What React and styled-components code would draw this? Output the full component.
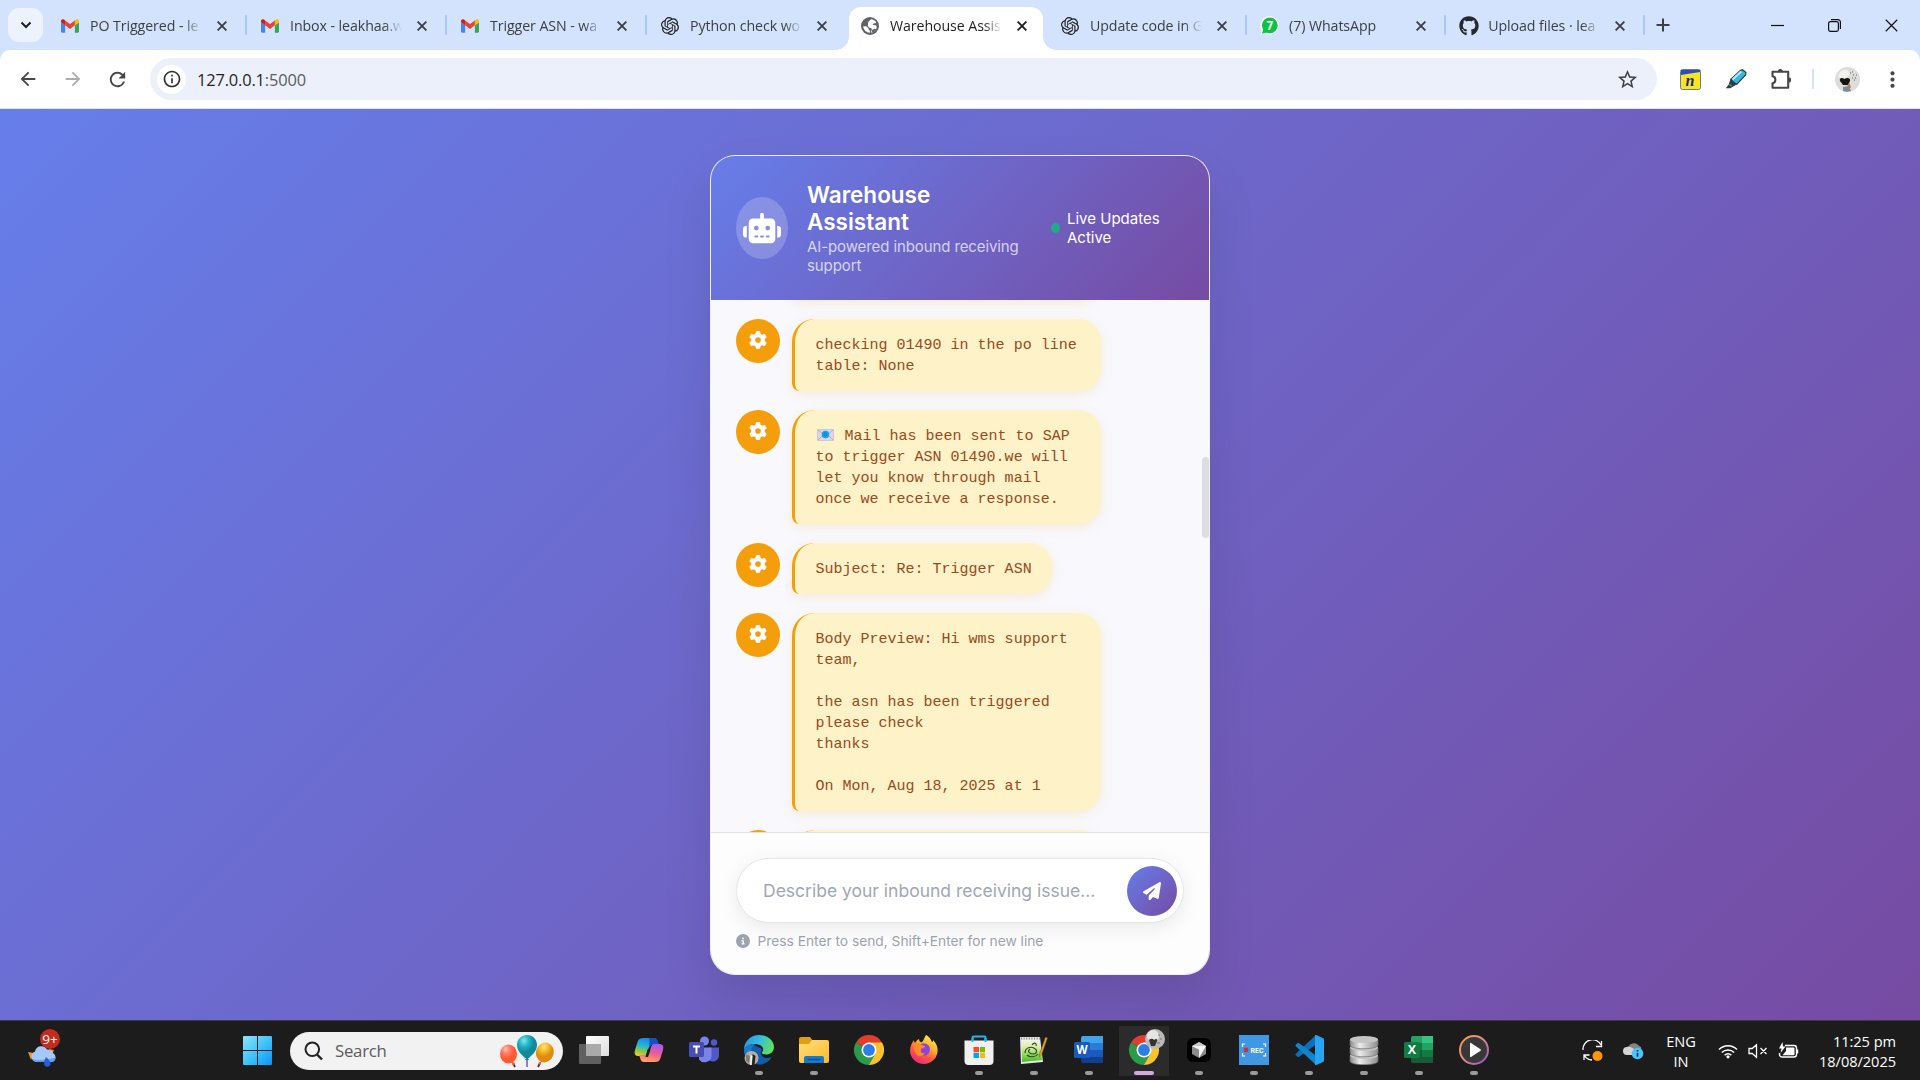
import React from "react";
import styled, { createGlobalStyle, css } from "styled-components";
import { FaRobot, FaGear, FaPaperPlane, FaCircleInfo, FaGithub } from "react-icons/fa6";
import { SiOpenai } from "react-icons/si";
import { MdArrowBack, MdArrowForward, MdRefresh, MdStarOutline, MdMoreVert, MdInfoOutline } from "react-icons/md";

const ui = `"Open Sans", "Noto Sans", sans-serif`;
const inter = `Inter, "Liberation Sans", sans-serif`;
const brand = "linear-gradient(135deg, #667eea 0%, #764ba2 100%)";

const GlobalStyle = createGlobalStyle`
  *, *::before, *::after { box-sizing: border-box; }
  body { margin: 0; overflow: hidden; font-family: ${ui}; }
  svg { display: block; flex: none; }
`;

const Screen = styled.div`
  width: 1920px;
  height: 1080px;
  display: grid;
  grid-template-columns: 1920px;
  grid-template-rows: 50px 59px 911px 60px;
  background: #d3e3fd;
`;

/* ---------- tab strip ---------- */
const TabStrip = styled.div`
  display: flex;
  align-items: center;
  padding-left: 8px;
  background: #d3e3fd;
`;
const TabSearch = styled.div`
  width: 35px;
  height: 34px;
  border-radius: 11px;
  background: #ecf2fe;
  display: grid;
  place-items: center;
  margin-right: 6px;
`;
const Tab = styled.div`
  position: relative;
  width: 194px;
  height: 43px;
  margin-top: 7px;
  margin-right: 6px;
  padding: 0 12px;
  display: flex;
  align-items: center;
  padding-bottom: 6px;
  color: #3c4043;
  &:nth-child(n + 7) { margin-right: 5.1px; }
  ${(p) =>
    p.$active &&
    css`
      background: #fff;
      border-radius: 12px 12px 0 0;
      color: #1f1f1f;
      &::before,
      &::after {
        content: "";
        position: absolute;
        bottom: 0;
        width: 13px;
        height: 13px;
      }
      &::before { left: -13px; background: radial-gradient(circle at 0 0, transparent 12.5px, #fff 13px); }
      &::after { right: -13px; background: radial-gradient(circle at 100% 0, transparent 12.5px, #fff 13px); }
    `}
`;
const Favicon = styled.span`
  width: 18px;
  height: 20px;
  display: grid;
  place-items: center;
  color: #1f1f1f;
`;
const TabTitle = styled.span`
  width: 112px;
  margin-left: 11px;
  overflow: hidden;
  white-space: nowrap;
  font-size: 14.2px;
  letter-spacing: -0.08px;
  line-height: 20px;
  mask-image: linear-gradient(90deg, #000 84%, transparent 100%);
`;
const TabClose = styled.span`
  margin-left: 15px;
`;
const Separator = styled.span`
  position: absolute;
  right: -4px;
  top: 8px;
  width: 2.5px;
  height: 20px;
  border-radius: 2px;
  background: #a8c7fa;
`;
const NewTab = styled.div`
  margin-left: 10px;
`;
const WindowControls = styled.div`
  margin-left: auto;
  display: flex;
  align-items: center;
  gap: 44.2px;
  padding-right: 22px;
`;

/* ---------- toolbar ---------- */
const Toolbar = styled.div`
  display: flex;
  align-items: center;
  background: #fff;
  border-radius: 10px 10px 0 0;
  border-bottom: 1px solid #dfe3e8;
  padding: 0 15px 0 17px;
  color: #474747;
`;
const NavButtons = styled.div`
  display: flex;
  gap: 22.5px;
  width: 133px;
`;
const Omnibox = styled.div`
  width: 1507px;
  height: 42px;
  border-radius: 21px;
  background: #ecf0fa;
  display: flex;
  align-items: center;
  padding: 0 18px 0 7px;
  color: #3f4145;
`;
const SiteInfo = styled.span`
  width: 29px;
  height: 29px;
  border-radius: 50%;
  background: #fff;
  display: grid;
  place-items: center;
`;
const Url = styled.span`
  flex: 1;
  margin-left: 11px;
  font-size: 16.4px;
  letter-spacing: -0.15px;
  color: #1f1f1f;
`;
const Port = styled.span`
  color: #5a5d61;
`;
const Actions = styled.div`
  display: flex;
  align-items: center;
  justify-content: space-between;
  width: 225px;
  margin-left: 23px;
`;
const Extensions = styled.div`
  display: flex;
  align-items: center;
  gap: 24px;
`;
const Divider = styled.span`
  width: 2px;
  height: 20px;
  background: #d3e3fd;
`;

/* ---------- page ---------- */
const Page = styled.main`
  background: ${brand};
  display: flex;
  align-items: center;
  justify-content: center;
  font-family: ${inter};
`;
const Card = styled.section`
  width: 500px;
  height: 820px;
  border-radius: 25px;
  border: 1px solid rgba(255, 255, 255, 0.9);
  background: #fdfdfd;
  overflow: hidden;
  display: flex;
  flex-direction: column;
  box-shadow: 0 25px 50px rgba(0, 0, 0, 0.1);
  background-clip: padding-box;
`;
const CardHeader = styled.header`
  height: 144px;
  padding: 0 25px;
  background: ${brand};
  display: flex;
  align-items: center;
  color: #fff;
`;
const BotAvatar = styled.div`
  width: 52px;
  height: 62px;
  border-radius: 50%;
  background: rgba(255, 255, 255, 0.2);
  display: grid;
  place-items: center;
`;
const Heading = styled.div`
  margin-left: 19px;
  width: 244px;
  padding-top: 1.5px;
`;
const Title = styled.h1`
  margin: 0;
  width: 160px;
  font-size: 22.5px;
  line-height: 27px;
  font-weight: 600;
`;
const Subtitle = styled.p`
  margin: 2px 0 0;
  width: 225px;
  font-size: 15px;
  line-height: 19px;
  letter-spacing: -0.1px;
  color: rgba(255, 255, 255, 0.72);
`;
const LiveDot = styled.span`
  width: 9px;
  height: 10px;
  border-radius: 50%;
  background: #22a98a;
`;
const LiveText = styled.span`
  width: 110px;
  margin-left: 7px;
  font-size: 15px;
  line-height: 19px;
`;

const ChatArea = styled.div`
  height: 532px;
  overflow: hidden;
  background: #f8f8fd;
  display: flex;
  justify-content: space-between;
`;
const Messages = styled.div`
  display: flex;
  flex-direction: column;
  justify-content: flex-start;
  gap: 19px;
  margin-top: -51px;
  padding-left: 25px;
`;
const Message = styled.div`
  display: flex;
  align-items: flex-start;
  gap: 12px;
`;
const MessageIcon = styled.div`
  width: 44px;
  height: 44px;
  border-radius: 50%;
  background: #f59e0b;
  color: #fff;
  display: grid;
  place-items: center;
  padding-bottom: 1px;
`;
const Bubble = styled.div`
  width: ${(p) => (p.$fit ? "auto" : "309px")};
  min-height: 51px;
  padding: 16px 20px 14px 20.6px;
  border-left: 3px solid #f59e0b;
  border-radius: 22.5px 22.5px 22.5px 7.5px;
  background: #fef2c8;
  color: #984a1a;
  font-family: "Courier New", "Liberation Mono", monospace;
  font-size: 15px;
  line-height: 21px;
  white-space: pre-wrap;
  box-shadow: 0 3px 12px rgba(245, 158, 11, 0.15);
  svg { display: inline-block; vertical-align: -1px; margin: 0 1.5px; }
`;
const Scrollbar = styled.div`
  width: 7px;
  height: 81px;
  margin-top: 157px;
  border-radius: 4px;
  background: #dddde2;
`;
const Composer = styled.footer`
  flex: 1;
  border-top: 1px solid #e3e3e6;
  background: #fdfdfd;
  padding: 25px 25px 0;
`;
const InputPill = styled.div`
  width: 448px;
  height: 65px;
  border: 1px solid #e5e5e7;
  border-radius: 33px;
  background: #fff;
  box-shadow: 0 5px 19px rgba(0, 0, 0, 0.08);
  display: flex;
  align-items: center;
  justify-content: space-between;
  padding: 1px 6px 0 26px;
`;
const Placeholder = styled.span`
  font-size: 17.5px;
  color: #a0a7b4;
`;
const SendButton = styled.button`
  width: 50px;
  height: 50px;
  border: 0;
  border-radius: 50%;
  padding: 0;
  background: ${brand};
  color: #fff;
  display: grid;
  place-items: center;
`;
const Hint = styled.div`
  display: flex;
  align-items: center;
  gap: 7.5px;
  margin-top: 8px;
  height: 20px;
  font-size: 13.75px;
  color: #9ca3af;
`;

/* ---------- taskbar ---------- */
const Taskbar = styled.div`
  display: grid;
  grid-template-columns: 243px auto 1fr;
  align-items: center;
  background: #1c1c1c;
  border-top: 1px solid #3a3a40;
  color: #fff;
`;
const Widgets = styled.div`
  padding-left: 26px;
  padding-bottom: 8px;
`;
const Center = styled.div`
  display: flex;
  align-items: center;
`;
const SearchPill = styled.div`
  width: 273px;
  height: 38px;
  margin: 0 3.5px 0 18px;
  border-radius: 19px;
  background: #f2f2f2;
  display: flex;
  align-items: center;
  padding: 0 8px 0 14px;
  color: #5c5c5c;
  font-size: 16.8px;
  letter-spacing: -0.25px;
`;
const SearchLabel = styled.span`
  flex: 1;
  margin-left: 12px;
`;
const AppSlot = styled.div`
  width: 55px;
  height: 50px;
  display: grid;
  grid-template-rows: 45px 5px;
  justify-items: center;
  align-items: center;
  background: ${(p) => (p.$active ? "linear-gradient(#2b2b2b,#2b2b2b) center / 50px 50px no-repeat" : "none")};
  &::after {
    content: "";
    width: ${(p) => (p.$active ? 20 : 8)}px;
    height: 4px;
    border-radius: 2px;
    background: ${(p) => (p.$active ? "#d5a9e0" : p.$open ? "#9a9a9a" : "transparent")};
  }
  svg { margin-top: 3px; }
`;
const Tray = styled.div`
  display: flex;
  align-items: center;
  justify-content: flex-end;
  padding-right: 24px;
  font-size: 14.6px;
  letter-spacing: -0.05px;
  line-height: 20px;
`;
const SyncStatus = styled.div`
  display: flex;
  align-items: center;
  gap: 19px;
`;
const Language = styled.div`
  width: 40px;
  margin: 0 17px;
  text-align: center;
`;
const Status = styled.div`
  display: flex;
  align-items: center;
  gap: 10px;
`;
const Clock = styled.div`
  width: 90px;
  margin-left: 7px;
  text-align: right;
  white-space: nowrap;
`;

/* ---------- drawings ---------- */
const Gmail = () => (
  <svg width="18" height="14" viewBox="0 0 24 18">
    <path d="M0 4v12.4C0 17.3.7 18 1.6 18h3.9V8z" fill="#4285f4" />
    <path d="M24 4v12.4c0 .9-.7 1.6-1.6 1.6h-3.9V8z" fill="#34a853" />
    <path d="M18.500 1.500V8L24 4V2.400C24 .3 21.700-.8 20.100.4z" fill="#fbbc04" />
    <path d="M5.500 8V1.500L12 6.400l6.500-4.900V8L12 12.900z" fill="#ea4335" />
    <path d="M0 2.400V4l5.500 4V1.500L3.900.4C2.300-.8 0 .3 0 2.400z" fill="#c5221f" />
  </svg>
);
const Globe = () => (
  <svg width="18" height="18" viewBox="0 0 18 18">
    <circle cx="9" cy="9" r="9" fill="#5f6368" />
    <path d="M10 2.200c2.500.2 4.300 1.600 5.300 3.300-1 1.300-2.300.6-3.300 1.200-.8.500.2 1.500 1.300 1.400 1.300 0 2.200.8 2.500 1.600-.3 3.200-2.600 5.600-5.800 6.100-.6-1.300.3-2 .8-2.700.5-1-.2-1.800-1.400-2.100C7.500 10.500 6.300 9 7 7.800 7.300 7 6.600 6.300 7.200 5.200 7.700 4.200 8.600 4 10 2.200z" fill="#fff" />
    <path d="M2.200 9.300c1.800-.3 3.800 0 4.600 1.100.8 1 .7 2.200 1.700 2.800.6.600.6 1.700.2 2.600-3.500-.200-6.300-3-6.500-6.500z" fill="#fff" />
    <path d="M11 13c1-.3 1.500-1.200 2.500-1.200.8 0 1.300.2 1.600.4-1 1.800-2.800 3.200-4.600 3.500z" fill="#5f6368" />
  </svg>
);
const Whatsapp = () => (
  <svg width="19" height="20" viewBox="0 0 19 20">
    <path d="M9.800.3a9 9 0 0 1 0 18.100c-1.600 0-3-.4-4.300-1.100L.3 19l1.400-5A9 9 0 0 1 9.800.3z" fill="#fff" />
    <circle cx="9.800" cy="9.300" r="7.900" fill="#0ec244" />
    <path d="M2 17.800l1.300-5 3.500 3.600z" fill="#0ec244" />
    <text x="9.800" y="13.500" fontSize="11.500" fontWeight="700" fill="#fff" textAnchor="middle" fontFamily="Open Sans, sans-serif">7</text>
  </svg>
);
const Cross = ({ size = 10, weight = 1.9, color = "#333" }) => (
  <svg width={size} height={size} viewBox="0 0 10 10">
    <path d="M.6.6l8.800 8.800M9.400.6L.6 9.400" stroke={color} strokeWidth={weight} fill="none" />
  </svg>
);
const YellowNote = () => (
  <svg width="21" height="21" viewBox="0 0 21 21">
    <rect x=".5" y=".5" width="20" height="20" rx="2" fill="#fbe51e" stroke="#6c7a9c" />
    <path d="M1 1h19v2L1 6z" fill="#2850b8" />
    <text x="10" y="16.500" fontSize="16" fontWeight="700" fontStyle="italic" fill="#1a2a78" textAnchor="middle" fontFamily="Liberation Serif, serif">n</text>
  </svg>
);
const Highlighter = () => (
  <svg width="22" height="20" viewBox="0 0 22 20">
    <path d="M15.500 1.200L17.500.7l3.500 2.800-.4 2.500-9 9.500-6-5z" fill="#35b9de" stroke="#2a3a40" strokeWidth="1.100" />
    <path d="M16.200 2.500L7.500 10.500" stroke="#a6ecfa" strokeWidth="2.200" />
    <path d="M5.400 10.300l6.200 5.200-3 1.700-3.300 2H.8l2.800-3.500z" fill="#333c40" />
    <path d="M4.500 15.500l2 1.500" stroke="#2fb9dc" strokeWidth="1.200" />
  </svg>
);
const Puzzle = () => (
  <svg width="21" height="20" viewBox="0 0 21 20">
    <path d="M1.500 2.800H17.200V18.800H1.500V14.300c3.800-.4 3.800-6.600 0-7z" fill="none" stroke="#474747" strokeWidth="2.100" strokeLinejoin="round" />
    <path d="M6.800 2.500a2.500 2.500 0 0 1 5 0zM17.500 8.300a2.600 2.600 0 0 1 0 5.200z" fill="#474747" />
  </svg>
);
const Profile = () => (
  <svg width="25" height="25" viewBox="0 0 25 25">
    <circle cx="12.500" cy="12.500" r="12.500" fill="#dcddd9" />
    <path d="M5 5c5-4 9-2 10 2l-5 5-7-2z" fill="#f1f2f0" />
    <path d="M5 14c-1-3 2-4 4.500-2C12 10 16 11 15 14l-2 4H8z" fill="#17130f" />
    <path d="M8 20l6-1 2 5c-3 1-6 1-8 0z" fill="#7c8d92" />
    <path d="M12.500 18l2-2 1.500 5h-3z" fill="#ae7d61" />
    <path d="M15 6h1M18 8h1M17 5h1M20 11h1M19 13h1M17 11h1M21 8h1" stroke="#666" />
  </svg>
);
const MailEmoji = () => (
  <svg width="17" height="12" viewBox="0 0 17 12">
    <rect x=".3" y=".3" width="16.400" height="11.400" rx="1" fill="#ddd5e8" stroke="#b9aecb" strokeWidth=".6" />
    <path d="M1 1l7.500 6L16 1M1 11l5-5M16 11l-5-5" stroke="#aba0bf" strokeWidth=".8" fill="none" />
    <circle cx="8.500" cy="5.500" r="3.800" fill="#10a5ee" />
    <circle cx="8.500" cy="5.500" r="1.500" fill="none" stroke="#0a6fbe" strokeWidth=".8" />
  </svg>
);
const Weather = () => (
  <svg width="36" height="40" viewBox="0 0 36 40">
    <path d="M2 25l6 1-3 7zM23 22l5 1-2 5z" fill="#f09a1c" />
    <path d="M10 35a5.500 5.500 0 0 1-1-10.500 6.500 6.500 0 0 1 12-2 6 6 0 0 1 6 3.500A5 5 0 0 1 26 35z" fill="#a6c8f8" />
    <path d="M10 35a5 5 0 0 1-4-3c5 2 18 1 24-2-.5 3-2 5-4 5z" fill="#6b9bea" />
    <path d="M20 30c3 3 5 5 4.500 7.500a3.300 3.300 0 0 1-6.300 0C17.800 35 19 32 20 30z" fill="#1f5fe0" />
    <circle cx="24" cy="12" r="10" fill="#c42b1c" />
    <text x="24" y="17" fontSize="13.500" fill="#fff" textAnchor="middle" fontFamily="Open Sans, sans-serif">9+</text>
  </svg>
);
const Windows = () => (
  <svg width="29" height="29" viewBox="0 0 29 29">
    <defs>
      <linearGradient id="win" x1="0" y1="0" x2="1" y2="1"><stop stopColor="#8fe3ff" /><stop offset=".5" stopColor="#41c4fb" /><stop offset="1" stopColor="#0a93f5" /></linearGradient>
    </defs>
    <path d="M1 0h13v14H0V1a1 1 0 0 1 1-1zM15 0h13a1 1 0 0 1 1 1v13H15zM0 15h14v14H1a1 1 0 0 1-1-1zM15 15h14v13a1 1 0 0 1-1 1H15z" fill="url(#win)" />
  </svg>
);
const Magnifier = () => (
  <svg width="19" height="20" viewBox="0 0 19 20">
    <circle cx="8.300" cy="8.300" r="6.800" fill="none" stroke="#222" strokeWidth="2" />
    <path d="M13 13.500l5 5" stroke="#222" strokeWidth="2.400" />
  </svg>
);
const Balloons = () => (
  <svg width="56" height="34" viewBox="0 0 56 34">
    <defs>
      <radialGradient id="bt" cx=".35" cy=".25"><stop stopColor="#7ceaf0" /><stop offset=".5" stopColor="#22b5c4" /><stop offset="1" stopColor="#11889c" /></radialGradient>
      <radialGradient id="br" cx=".35" cy=".25"><stop stopColor="#ffc2b0" /><stop offset=".5" stopColor="#ff7a66" /><stop offset="1" stopColor="#ff5a30" /></radialGradient>
      <radialGradient id="by" cx=".35" cy=".25"><stop stopColor="#ffe680" /><stop offset=".5" stopColor="#f8b828" /><stop offset="1" stopColor="#de8b10" /></radialGradient>
    </defs>
    <path d="M28 24v9" stroke="#5a3ca8" strokeWidth="1.300" />
    <path d="M14 29l2 4M41 29l-2 4" stroke="#5b1e60" strokeWidth="1.800" />
    <ellipse cx="9.500" cy="20" rx="8.500" ry="9.500" fill="url(#br)" />
    <ellipse cx="46" cy="18.500" rx="8.800" ry="10" fill="url(#by)" transform="rotate(18 46 18)" />
    <path d="M12 27l4 2-2 3zM43 27l-4 2 2 2z" fill="#e5672c" />
    <path d="M28 1c6 0 10 4.500 10 10 0 6-5 10-8 13h-4c-3-3-8-7-8-13C18 5.500 22 1 28 1z" fill="url(#bt)" />
    <path d="M28 22l-2 4h4z" fill="#15889c" />
  </svg>
);
const TaskView = () => (
  <svg width="30" height="30" viewBox="0 0 30 30">
    <defs><linearGradient id="tv" x1="0" y1="0" x2="1" y2="1"><stop stopColor="#fff" /><stop offset="1" stopColor="#ddd" /></linearGradient></defs>
    <rect x="0" y="9" width="22" height="20" rx="1" fill="#606060" />
    <rect x="7" y="1" width="23" height="20" rx="1" fill="url(#tv)" />
    <path d="M7 9h15v12H7z" fill="#aaa" />
  </svg>
);
const Copilot = () => (
  <svg width="30" height="30" viewBox="0 0 30 30">
    <defs>
      <linearGradient id="cpa" x1=".6" y1="0" x2=".3" y2="1"><stop stopColor="#1580e8" /><stop offset=".45" stopColor="#29b4d8" /><stop offset=".75" stopColor="#7ecb49" /><stop offset="1" stopColor="#f5c71b" /></linearGradient>
      <linearGradient id="cpb" x1=".7" y1="0" x2=".4" y2="1"><stop stopColor="#a05af0" /><stop offset=".5" stopColor="#ee5b9a" /><stop offset="1" stopColor="#ffa457" /></linearGradient>
    </defs>
    <path d="M9 3h11c2 0 3 1 3.500 3L25 10h-6c-3 0-4 1.500-5 5l-1.500 4C11.500 21 10 21 8 21H5c-4 0-5-2-4-6l2.500-8C4.500 4 6 3 9 3z" fill="url(#cpa)" />
    <path d="M15 3h5c2 0 3 1 3.500 3L25 10h-6c-2 0-3 .5-4 2 0-4 1-6 0-9z" fill="#1552c0" />
    <path d="M21 27H10c-2 0-3-1-3.500-3L5 20h6c3 0 4-1.500 5-5l1.500-4C18.500 9 20 9 22 9h3c4 0 5 2 4 6l-2.500 8C25.500 26 24 27 21 27z" fill="url(#cpb)" />
    <path d="M16.500 14.500L14 22h-2.500l2.200-8z" fill="#1c1c1c" />
  </svg>
);
const Teams = () => (
  <svg width="30" height="30" viewBox="0 0 30 30">
    <circle cx="15.500" cy="6" r="4.500" fill="#7b83eb" /><circle cx="25" cy="7.500" r="3.200" fill="#5059c9" />
    <path d="M20 12.500h10v8a6 6 0 0 1-10 4.500z" fill="#5059c9" />
    <path d="M10 12.500h12.500v9a7 7 0 0 1-12.500 3z" fill="#7b83eb" />
    <rect y="7" width="15" height="15" rx="1.500" fill="#464eb8" />
    <path d="M4 11.500h7M7.500 11.500v7" stroke="#fff" strokeWidth="2" />
  </svg>
);
const Edge = () => (
  <svg width="30" height="30" viewBox="0 0 30 30">
    <defs>
      <linearGradient id="eg" x1="0" y1=".2" x2="1" y2=".5"><stop stopColor="#2a8fe0" /><stop offset=".5" stopColor="#33bfe0" /><stop offset="1" stopColor="#62e05a" /></linearGradient>
    </defs>
    <path d="M0 15a15 15 0 0 0 28 7c-4 2-10 1-11-3-1-2 1-3 1-5l-8-4z" fill="#0f5fae" />
    <path d="M0 15C0 6 7 0 15 0c9 0 15 6 15 12 0 5-4 7.500-8 7.500s-5-1.500-3.500-3C21 13 17 9 11 9 5 9 1 12 0 15z" fill="url(#eg)" />
    <path d="M0 15c1-4 6-6 11-6-3 2-5 6-3 12l2 8A15 15 0 0 1 0 15z" fill="#1c7bc8" />
    <circle cx="7.500" cy="23" r="7" fill="#b9aca1" />
    <path d="M8.500 19l3 2-1 9H8z" fill="#222321" /><path d="M2 19l4 2-1 7-3-2z" fill="#77816c" /><path d="M6.500 20l2 1-1 9H6z" fill="#f4f3f0" />
  </svg>
);
const Explorer = () => (
  <svg width="30" height="30" viewBox="0 0 30 30">
    <defs><linearGradient id="ex" x1="0" y1="0" x2="1" y2="1"><stop stopColor="#ffe07a" /><stop offset="1" stopColor="#fdb92a" /></linearGradient></defs>
    <path d="M0 4a2 2 0 0 1 2-2h9l3 4v6H0z" fill="#e0a010" />
    <path d="M0 9h10l3-4h15a2 2 0 0 1 2 2v19a2 2 0 0 1-2 2H2a2 2 0 0 1-2-2z" fill="url(#ex)" />
    <path d="M5 28v-5a2 2 0 0 1 2-2h16a2 2 0 0 1 2 2v5z" fill="#1579cc" />
    <path d="M8.500 24.500h13" stroke="#0a4e94" strokeWidth="1.300" />
  </svg>
);
const ChromeShapes = () => (
  <>
    <path d="M15 15L2 7.500A15 15 0 0 1 28 7.500z" fill="#e33b2e" />
    <path d="M28 7.500A15 15 0 0 1 15 30l-2-4 7-11-5-7.500z" fill="#fcc42a" />
    <path d="M2 7.500A15 15 0 0 0 15 30l6.500-11.300L15 15z" fill="#2c9a49" />
    <circle cx="15" cy="15" r="7.500" fill="#fff" />
    <circle cx="15" cy="15" r="5.900" fill="#2e7bea" />
  </>
);
const Chrome = () => (
  <svg width="30" height="30" viewBox="0 0 30 30"><ChromeShapes /></svg>
);
const ChromeProfile = () => (
  <svg width="44" height="42" viewBox="-7 -6 44 42">
    <ChromeShapes />
    <circle cx="26" cy="4" r="10" fill="#b9b9b7" />
    <circle cx="24" cy="1" r="6" fill="#e6e6e4" />
    <path d="M20 5c2-2 4-1 5 0 2-2 4-1 3 1l-2 5h-4z" fill="#35322f" />
    <path d="M29 0h2M31 4h2M28 8h3" stroke="#777" />
  </svg>
);
const Firefox = () => (
  <svg width="30" height="30" viewBox="0 0 30 30">
    <defs>
      <linearGradient id="ff" x1=".8" y1="0" x2=".25" y2="1"><stop stopColor="#fff04a" /><stop offset=".35" stopColor="#ffb52a" /><stop offset=".65" stopColor="#ff5a3c" /><stop offset="1" stopColor="#e8208a" /></linearGradient>
    </defs>
    <path d="M17 0c4 2 5 5 6 7 1 0 1-1 1-2 4 4 5 8 4.500 12A13.700 13.700 0 0 1 15 29C7 29 1 23 1 15.500 1 11 3 8 5 5c0 1 0 2 1 3 1-2 2-3 4-4 0 2 1 3 2 3 2 1 3-4 5-7z" fill="url(#ff)" />
    <circle cx="14.800" cy="14.500" r="6.200" fill="#8a45e0" />
    <path d="M5 10c3-3 6-1 8 0l3 1c0 2-3 2-4 3-1 3 1 5 4 4-2 4-8 4-10-1-1-2-1-5-1-7z" fill="#ff8a28" />
  </svg>
);
const Store = () => (
  <svg width="30" height="30" viewBox="0 0 30 30">
    <path d="M8.500 7V2.500a1 1 0 0 1 1-1h11a1 1 0 0 1 1 1V7" fill="none" stroke="#23b4ef" strokeWidth="2" />
    <path d="M.5 5.500h29V26a4 4 0 0 1-4 4h-21a4 4 0 0 1-4-4z" fill="#f0f0f0" />
    <path d="M8.500 7V3M21.500 7V3" stroke="#23b4ef" strokeWidth="2" />
    <path d="M9.500 12H15v5.300H9.500z" fill="#f25022" /><path d="M16 12h5v5.300h-5z" fill="#7fba00" /><path d="M9.500 18H15v5H9.500z" fill="#00a4ef" /><path d="M16 18h5v5h-5z" fill="#ffb900" />
  </svg>
);
const NotepadPlus = () => (
  <svg width="30" height="30" viewBox="0 0 30 30">
    <defs><linearGradient id="np" x1="0" y1="0" x2="0" y2="1"><stop stopColor="#f4f4ee" /><stop offset=".35" stopColor="#d8ec9c" /><stop offset="1" stopColor="#3fc022" /></linearGradient></defs>
    <path d="M1 2h20l3 25-22 2z" fill="#e8e8e4" />
    <path d="M2.500 5h18L23 25 3 27z" fill="url(#np)" />
    <path d="M2 3.500h19" stroke="#888" strokeWidth="2" strokeDasharray="1 1.600" />
    <path d="M6 18c0-5 5-7 9-5s3 6-1 6-6-3-3-5M8 20c3 3 9 2 11-1M13 10c2-3 5-2 4 1" stroke="#2b4a22" strokeWidth="1.100" fill="none" />
    <path d="M26.500 2l2 1-6 17-2 2V19z" fill="#e7a52c" stroke="#6b4a1c" strokeWidth=".5" />
  </svg>
);
const Word = () => (
  <svg width="30" height="30" viewBox="0 0 30 30">
    <path d="M7 3a2 2 0 0 1 2-2h20v7H7z" fill="#41a5ee" /><path d="M7 8h22v7H7z" fill="#2b7cd3" /><path d="M7 15h22v7H7z" fill="#185abd" /><path d="M7 22h22v6H9a2 2 0 0 1-2-2z" fill="#103f91" />
    <rect y="7" width="16" height="16" rx="1.500" fill="#185abd" />
    <text x="8" y="19.300" fontSize="11.500" fontWeight="700" fill="#fff" textAnchor="middle" fontFamily="Open Sans, sans-serif">W</text>
  </svg>
);
const Excel = () => (
  <svg width="30" height="30" viewBox="0 0 30 30">
    <path d="M7 3a2 2 0 0 1 2-2h9v7H7z" fill="#21a366" /><path d="M18 1h11v7H18z" fill="#33c481" /><path d="M7 8h11v7H7z" fill="#107c41" /><path d="M18 8h11v7H18z" fill="#21a366" /><path d="M7 15h22v7H18v6H9a2 2 0 0 1-2-2z" fill="#185c37" /><path d="M18 15h11v7H18z" fill="#107c41" /><path d="M18 22h11v6H18z" fill="#185c37" />
    <rect y="7" width="16" height="16" rx="1.500" fill="#107c41" />
    <text x="8" y="19.300" fontSize="12.500" fontWeight="700" fill="#fff" textAnchor="middle" fontFamily="Open Sans, sans-serif">X</text>
  </svg>
);
const Cursor = () => (
  <svg width="30" height="30" viewBox="0 0 30 30">
    <rect x="3" y="3" width="24" height="24" rx="6" fill="#000" />
    <path d="M15 7l7 4v8l-7 4-7-4v-8z" fill="#8b8b8b" />
    <path d="M15 7l7 4-7 3.500L8 11z" fill="#c9c9c9" /><path d="M22 11L15 23v-8.500L8 11z" fill="#f4f4f4" />
  </svg>
);
const Recorder = () => (
  <svg width="30" height="30" viewBox="0 0 30 30">
    <rect width="30" height="30" fill="#3f97e6" />
    <path d="M6 9H3.500v3M24 9h2.500v3M6 21H3.500v-3M24 21h2.500v-3" stroke="#fff" strokeWidth="1.200" fill="none" />
    <circle cx="7" cy="15" r="2.400" fill="#e02a34" />
    <text x="18" y="17.600" fontSize="7" fontWeight="700" fill="#fff" textAnchor="middle" fontFamily="Roboto, sans-serif">REC</text>
  </svg>
);
const VSCode = () => (
  <svg width="30" height="30" viewBox="0 0 30 30">
    <path d="M22 0l-20 18.500c-.8.700-.8 1.200-.2 1.800l1.600 1.500c.6.400 1.200.4 1.700 0L30 3.500z" fill="#0a70b8" />
    <path d="M22 30L2 11.500c-.8-.7-.8-1.200-.2-1.800l1.600-1.500c.6-.4 1.200-.4 1.700 0L30 26.500z" fill="#1284ce" />
    <path d="M22 0l7 3.300c.6.300 1 .9 1 1.600v20.200c0 .7-.4 1.300-1 1.600L22 30c-.7.200-1 0-1-.6V.6c0-.6.300-.8 1-.6z" fill="#27a5f2" />
  </svg>
);
const Database = () => (
  <svg width="30" height="30" viewBox="0 0 30 30">
    <defs><linearGradient id="db"><stop stopColor="#8a8a8a" /><stop offset=".35" stopColor="#ececec" /><stop offset="1" stopColor="#8c8c8c" /></linearGradient></defs>
    {[18, 10, 2].map((y) => (
      <g key={y}>
        <path d={`M1 ${y + 3}v5c0 5 28 5 28 0v-5z`} fill="url(#db)" stroke="#6d6d6d" strokeWidth=".7" />
        <ellipse cx="15" cy={y + 2.5} rx="14" ry="3.500" fill="#c4c4c4" />
      </g>
    ))}
  </svg>
);
const Player = () => (
  <svg width="30" height="30" viewBox="0 0 30 30">
    <defs><linearGradient id="mp" x1="0" y1="0" x2="1" y2="1"><stop stopColor="#ff9a3c" /><stop offset=".5" stopColor="#e08a88" /><stop offset="1" stopColor="#8a50d0" /></linearGradient></defs>
    <circle cx="15" cy="15" r="14" fill="#383838" stroke="url(#mp)" strokeWidth="2" />
    <path d="M11 8.500c0-.7.500-.9 1-.6l9.500 6.400c.5.400.5 1 0 1.400L12 22.100c-.5.300-1 .1-1-.6z" fill="#fff" />
  </svg>
);
const Sync = () => (
  <svg width="22" height="22" viewBox="0 0 22 22">
    <path d="M1 10A9.500 9.500 0 0 1 19 5M19.500 1v5.500H14M2 20v-5h5.500M2.500 15.500A9 9 0 0 0 10 20" fill="none" stroke="#fff" strokeWidth="1.300" />
    <circle cx="15.500" cy="16" r="5" fill="#ff9800" />
  </svg>
);
const CloudInfo = () => (
  <svg width="21" height="18" viewBox="0 0 21 18">
    <path d="M4.500 12A4.500 4.500 0 0 1 6 4a6 6 0 0 1 10 0c3 0 3 5 1 8z" fill="#858585" />
    <path d="M4 13a4 4 0 0 1 0-8c3-1 6 1 8 3v5z" fill="#d4d4d4" />
    <circle cx="14.500" cy="11.500" r="5.800" fill="#4cc2ff" />
    <path d="M14.500 8v1.500M14.500 10.800v4" stroke="#103a55" strokeWidth="1.600" />
  </svg>
);
const Wifi = () => (
  <svg width="20" height="16" viewBox="0 0 20 16">
    <path d="M1 6.500a12.700 12.700 0 0 1 18 0M3.800 9.500a8.800 8.800 0 0 1 12.400 0M6.600 12.200a4.800 4.800 0 0 1 6.800 0" fill="none" stroke="#fff" strokeWidth="1.400" />
    <circle cx="10" cy="13.800" r="1.600" fill="#fff" />
  </svg>
);
const Muted = () => (
  <svg width="20" height="16" viewBox="0 0 20 16">
    <path d="M1 5.500h3.200L8.500 1.700v12.600L4.200 10.500H1zM12.500 5l6 6M18.500 5l-6 6" fill="none" stroke="#fff" strokeWidth="1.300" />
  </svg>
);
const Battery = () => (
  <svg width="21" height="17" viewBox="0 0 21 17">
    <path d="M7 3.500h9a2.500 2.500 0 0 1 2.500 2.500v6.500a2.500 2.500 0 0 1-2.500 2.500H4A2.500 2.500 0 0 1 1.500 12.500V11" fill="none" stroke="#fff" strokeWidth="1.400" />
    <path d="M8 5.500h7.500a1 1 0 0 1 1 1v5.700a1 1 0 0 1-1 1h-11L8 9z" fill="#fff" /><path d="M19.500 7.500v4" stroke="#fff" strokeWidth="1.500" />
    <path d="M4.500 0L1 6.500h2.500L2.500 11 7.500 4.500H5z" fill="#fff" />
  </svg>
);

const tabs = [
  { title: "PO Triggered - le", icon: <Gmail />, sep: true },
  { title: "Inbox - leakhaa.w", icon: <Gmail />, sep: true },
  { title: "Trigger ASN - wa", icon: <Gmail />, sep: true },
  { title: "Python check wo", icon: <SiOpenai size={18} /> },
  { title: "Warehouse Assis", icon: <Globe />, active: true },
  { title: "Update code in G", icon: <SiOpenai size={18} />, sep: true },
  { title: "(7) WhatsApp", icon: <Whatsapp />, sep: true },
  { title: "Upload files · lea", icon: <FaGithub size={20} color="#24292f" />, sep: true },
];

const messages = [
  { text: "" },
  { text: "checking 01490 in the po line table: None" },
  { mail: true, text: " Mail has been sent to SAP\nto trigger ASN 01490.we will\nlet you know through mail\nonce we receive a response." },
  { text: "Subject: Re: Trigger ASN", fit: true },
  { text: "Body Preview: Hi wms support\nteam,\n\nthe asn has been triggered\nplease check\nthanks\n\nOn Mon, Aug 18, 2025 at 1" },
  { text: "" },
];

const apps = [
  { icon: TaskView }, { icon: Copilot }, { icon: Teams }, { icon: Edge, open: true }, { icon: Explorer, open: true },
  { icon: Chrome }, { icon: Firefox }, { icon: Store, open: true }, { icon: NotepadPlus, open: true }, { icon: Word, open: true },
  { icon: ChromeProfile, active: true }, { icon: Cursor, open: true }, { icon: Recorder, open: true }, { icon: VSCode, open: true },
  { icon: Database, open: true }, { icon: Excel, open: true }, { icon: Player, open: true },
];

export default function App() {
  return (
    <Screen>
      <GlobalStyle />
      <TabStrip>
        <TabSearch>
          <svg width="12" height="8" viewBox="0 0 12 8"><path d="M1.500 1.500L6 6l4.500-4.500" fill="none" stroke="#1f1f1f" strokeWidth="2" /></svg>
        </TabSearch>
        {tabs.map((t) => (
          <Tab key={t.title} $active={t.active}>
            <Favicon>{t.icon}</Favicon>
            <TabTitle>{t.title}</TabTitle>
            <TabClose><Cross color={t.active ? "#1f1f1f" : "#3c4043"} /></TabClose>
            {t.sep && <Separator />}
          </Tab>
        ))}
        <NewTab>
          <svg width="14" height="14" viewBox="0 0 14 14"><path d="M7 .5v13M.5 7h13" stroke="#3c4043" strokeWidth="2" /></svg>
        </NewTab>
        <WindowControls>
          <svg width="13" height="13" viewBox="0 0 13 13"><path d="M0 6.500h13" stroke="#111" strokeWidth="1.200" /></svg>
          <svg width="13" height="13" viewBox="0 0 13 13"><path d="M3 .6h7a2.400 2.400 0 0 1 2.400 2.400v7" fill="none" stroke="#111" strokeWidth="1.200" /><rect x=".6" y="2.600" width="9.800" height="9.800" rx="1.800" fill="none" stroke="#111" strokeWidth="1.200" /></svg>
          <Cross size={13} weight={0.9} color="#111" />
        </WindowControls>
      </TabStrip>

      <Toolbar>
        <NavButtons>
          <MdArrowBack size={22} />
          <MdArrowForward size={22} color="#adadad" />
          <MdRefresh size={23} />
        </NavButtons>
        <Omnibox>
          <SiteInfo><MdInfoOutline size={20} color="#303134" /></SiteInfo>
          <Url>127.0.0.1<Port>:5000</Port></Url>
          <MdStarOutline size={23} />
        </Omnibox>
        <Actions>
          <Extensions>
            <YellowNote />
            <Highlighter />
            <Puzzle />
          </Extensions>
          <Divider />
          <Profile />
          <MdMoreVert size={25} />
        </Actions>
      </Toolbar>

      <Page>
        <Card>
          <CardHeader>
            <BotAvatar><FaRobot size={38} /></BotAvatar>
            <Heading>
              <Title>Warehouse Assistant</Title>
              <Subtitle>AI-powered inbound receiving support</Subtitle>
            </Heading>
            <LiveDot />
            <LiveText>Live Updates Active</LiveText>
          </CardHeader>
          <ChatArea>
            <Messages>
              {messages.map((m, i) => (
                <Message key={i}>
                  <MessageIcon><FaGear size={18} /></MessageIcon>
                  <Bubble $fit={m.fit}>{m.mail && <MailEmoji />}{m.text}</Bubble>
                </Message>
              ))}
            </Messages>
            <Scrollbar />
          </ChatArea>
          <Composer>
            <InputPill>
              <Placeholder>Describe your inbound receiving issue...</Placeholder>
              <SendButton><FaPaperPlane size={18} /></SendButton>
            </InputPill>
            <Hint><FaCircleInfo size={14} />Press Enter to send, Shift+Enter for new line</Hint>
          </Composer>
        </Card>
      </Page>

      <Taskbar>
        <Widgets><Weather /></Widgets>
        <Center>
          <Windows />
          <SearchPill><Magnifier /><SearchLabel>Search</SearchLabel><Balloons /></SearchPill>
          {apps.map(({ icon: Icon, open, active }, i) => (
            <AppSlot key={i} $open={open} $active={active}><Icon /></AppSlot>
          ))}
        </Center>
        <Tray>
          <SyncStatus><Sync /><CloudInfo /></SyncStatus>
          <Language>ENG<br />IN</Language>
          <Status><Wifi /><Muted /><Battery /></Status>
          <Clock>11:25 pm<br />18/08/2025</Clock>
        </Tray>
      </Taskbar>
    </Screen>
  );
}
